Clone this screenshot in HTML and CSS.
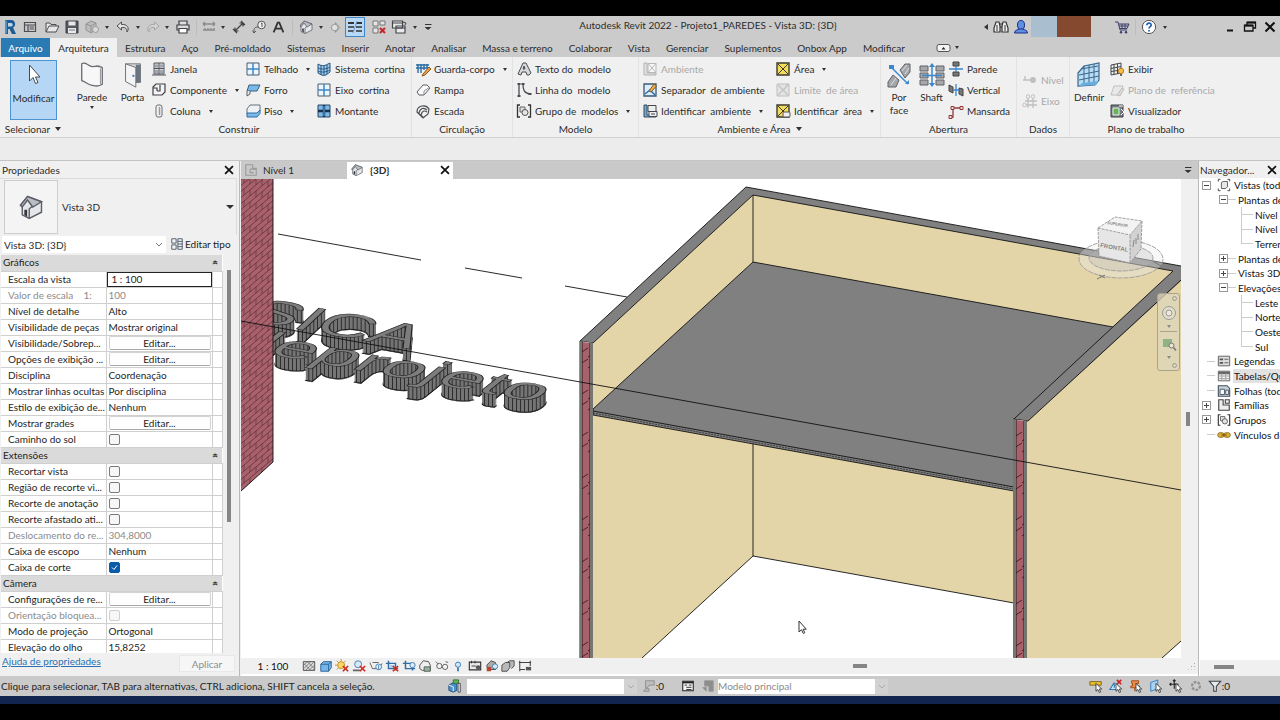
FILE: index.html
```html
<!DOCTYPE html>
<html lang="pt-BR">
<head>
<meta charset="utf-8">
<title>Autodesk Revit 2022 - Projeto1_PAREDES</title>
<link rel="stylesheet" href="styles.css">
</head>
<body>
<svg class="sprite" aria-hidden="true">
  <symbol id="i-r" viewBox="0 0 16 16"><path d="M3 1h6.500a4 4 0 0 1 1.500 7.500L14 15h-4L7.500 10H6v5H3z" fill="#1d5c94"/><path d="M6 4h3a1.500 1.500 0 0 1 0 3.500H6z" fill="#c9d3dc"/><path d="M3 1l2 1v12l-2 1z" fill="#4a93cc"/></symbol>
  <symbol id="i-home" viewBox="0 0 16 16"><path d="M2.500 3.500h11v9h-11zM2.500 6h11M6 6v6.500M7.500 8h4.500M7.500 10h4.500" fill="none" stroke="#4c4c52" stroke-width="1.200"/></symbol>
  <symbol id="i-open" viewBox="0 0 16 16"><path d="M2 13V4h4l1 1.500h5V7M2 13l3-6h10l-3 6z" fill="#e6e6e6" stroke="#4c4c52"/></symbol>
  <symbol id="i-save" viewBox="0 0 16 16"><path d="M2 2h12v12H2z" fill="#55575e" stroke="#3e4046"/><path d="M4.500 2.500h7v4h-7zM4 9h8v5H4z" fill="#e8e8ea"/><path d="M5 11h6" stroke="#777"/></symbol>
  <symbol id="i-sync" viewBox="0 0 16 16"><path d="M2 5l5-3 5 2v6l-5 4-5-3z" fill="#bdbdbd" stroke="#939393"/><path d="M2 5l5 2 5-3M7 7v7" fill="none" stroke="#939393"/><circle cx="11.500" cy="10.500" r="3" fill="#d9d9d9" stroke="#999"/></symbol>
  <symbol id="i-undo" viewBox="0 0 16 16"><path d="M6.500 3L2 7l4.500 4V8.500c4-.5 5.500 1 5.500 4.500 3-4 0-8-5.500-7.500z" fill="#e4e4e4" stroke="#4c4c52"/></symbol>
  <symbol id="i-redo" viewBox="0 0 16 16"><path d="M9.500 3L14 7l-4.500 4V8.500c-4-.5-5.500 1-5.500 4.500-3-4 0-8 5.500-7.500z" fill="#d4d4d4" stroke="#a5a5a5"/></symbol>
  <symbol id="i-print" viewBox="0 0 16 16"><path d="M4 6V2h8v4M4 11H2V6h12v5h-2" fill="#ddd" stroke="#3f4046" stroke-width="1.200"/><path d="M4 9.500h8V14H4z" fill="#fff" stroke="#3f4046" stroke-width="1.200"/></symbol>
  <symbol id="i-meas" viewBox="0 0 16 16"><path d="M2 5h12M2 5l2-2M2 5l2 2M14 5l-2-2M14 5l-2 2M2 11h12M4 9v2M7 9v2M10 9v2M13 9v2" fill="none" stroke="#8a8a8a" stroke-width="1.300"/></symbol>
  <symbol id="i-dim" viewBox="0 0 16 16"><path d="M4 12L12 4M2 10l4 4M10 2l4 4M4 12V8.500M4 12h3.500M12 4H8.500M12 4v3.500" fill="none" stroke="#3f4046" stroke-width="1.200"/></symbol>
  <symbol id="i-tag" viewBox="0 0 16 16"><circle cx="10.500" cy="6" r="3.800" fill="#eee" stroke="#55555b"/><path d="M10 4.500l1-.5v4M7 8c-4 0-4 2-4 6M3 14l-1.500-2.500M3 14l2-2" fill="none" stroke="#55555b"/></symbol>
  <symbol id="i-a" viewBox="0 0 16 16"><path d="M2 14L7 2h2l5 12M4.500 9.500h7" fill="none" stroke="#333" stroke-width="2.200"/></symbol>
  <symbol id="i-house" viewBox="0 0 16 16"><path d="M2 7l4-5 8 3v6l-7 3.500-4-2V8z" fill="#e4e6e9" stroke="#5c5f67" stroke-width=".8"/><path d="M7 14.500V9l2-1.500" fill="none" stroke="#5c5f67" stroke-width=".8"/><path d="M6 2l8 3-5 3-3-4-3 4-1-1z" fill="#b9bdc4" stroke="#5c5f67" stroke-width=".8"/><path d="M4.200 9.500h1.600v4l-1.600-1z" fill="#35383f"/></symbol>
  <symbol id="i-sect" viewBox="0 0 16 16"><path d="M8 2l5 6-5 6zM2 8h2" fill="#d5d5d5" stroke="#8a8a8a"/><circle cx="7" cy="8" r="4" fill="#e0e0e0" stroke="#8a8a8a"/></symbol>
  <symbol id="i-thin" viewBox="0 0 16 16"><path d="M1 4h6M9 4h6" stroke="#333" stroke-width="2"/><path d="M1 8h6M1 12h6M9 8h6M9 12h6" stroke="#333" stroke-width="1.400"/><path d="M6 14L10 2" stroke="#6a9bd1"/></symbol>
  <symbol id="i-closev" viewBox="0 0 16 16"><path d="M2 2h5v5H2zM9 2h5v4H9zM2 9h5v5H2z" fill="#e6e6e6" stroke="#777"/><path d="M9 9l5 5M14 9l-5 5" stroke="#c3272b" stroke-width="2"/></symbol>
  <symbol id="i-switch" viewBox="0 0 16 16"><path d="M1.500 2h10v7h-10zM5 7h9v7H5z" fill="#e9e9e9" stroke="#44464c" stroke-width="1.200"/><path d="M5 9h9M1.500 4h10M12 3l3 1-1 2" fill="none" stroke="#44464c"/></symbol>
  <symbol id="i-bin" viewBox="0 0 16 16"><path d="M3 3h3l1 4v6H1V9zM10 3h3l2 6v4H9V7z" fill="#eee" stroke="#333" stroke-width="1.200"/><path d="M6 5h4M7 8h2M4 6v6M12 6v6" stroke="#333"/></symbol>
  <symbol id="i-user" viewBox="0 0 16 16"><ellipse cx="8" cy="6" rx="3.500" ry="4.500" fill="#5f8fe0" stroke="#1b2f8a"/><path d="M1.500 14c0-3 3-3 5-4h3c2 1 5 1 5 4z" fill="#5f8fe0" stroke="#1b2f8a"/></symbol>
  <symbol id="i-cart" viewBox="0 0 16 16"><path d="M1 3h3l2 8h7M4.500 5H15l-2 4.500H6M8 5v4M11 5v4M5 7h9" fill="none" stroke="#3b3f6b"/><circle cx="7" cy="13.300" r="1.200" fill="#3b3f6b"/><circle cx="12" cy="13.300" r="1.200" fill="#3b3f6b"/></symbol>
  <symbol id="i-help" viewBox="0 0 16 16"><circle cx="8" cy="8" r="6.600" fill="#fff" stroke="#555"/><path d="M5.800 6.300c0-3 4.500-2.700 4.400-.2C10.100 7.700 8 7.500 8 9.500M8 11v1.500" fill="none" stroke="#1f5fae" stroke-width="1.700"/></symbol>
  <symbol id="i-restore" viewBox="0 0 16 16"><path d="M5 6V3.500h8.500V9H11M2.500 6.500H11V12H2.500z" fill="none" stroke="#111" stroke-width="1.300"/><path d="M2 6.500h9M5 3.500h9" stroke="#111" stroke-width="2"/></symbol>
  <symbol id="i-x" viewBox="0 0 16 16"><path d="M3.500 3.500l9 9M12.500 3.500l-9 9" stroke="#111" stroke-width="2"/></symbol>
  <symbol id="i-min" viewBox="0 0 16 16"><path d="M5 11.500h6" stroke="#111" stroke-width="2"/></symbol>
  <symbol id="i-ribbon" viewBox="0 0 20 16"><rect x="2" y="4.500" width="13" height="7" rx="2" fill="#f3f3f3" stroke="#555"/><path d="M6.500 9.500L8.500 7l2 2.500z" fill="#222"/></symbol>
  <symbol id="i-cursor" viewBox="0 0 16 24"><path d="M3.500 2v16l3.500-3.500 2.500 6 2.500-1-2.500-5.500h4.500z" fill="#fff" stroke="#45474d"/></symbol>
  <symbol id="i-wall" viewBox="0 0 26 30"><path d="M2 3c4-3 6 2 11 3 5 0 6-1 11 1v18c-4 3-7 2-11 1C8 25 6 22 2 21z" fill="#f7f7f8" stroke="#6a6c72" stroke-width="1.400"/><path d="M24 7c-2-2-4-2-7-2 M22 8v17" fill="none" stroke="#8b8d92"/></symbol>
  <symbol id="i-door" viewBox="0 0 20 30"><path d="M2 3h16v20h-6" fill="#d9dadd" stroke="#777a80"/><path d="M13 4h5v19h-5z" fill="#6a7580"/><path d="M2 3l11 4v21L2 22z" fill="#f4f4f5" stroke="#6a6c72"/><circle cx="10.500" cy="16" r="1.200" fill="#3877b8"/></symbol>
  <symbol id="i-window" viewBox="0 0 16 16"><path d="M3 2h10v11H3z" fill="#d5d7db" stroke="#55575d"/><path d="M8 2v11M3 7.500h10M1 14h14" stroke="#55575d"/><path d="M4 3.500h3v3H4zM9 3.500h3v3H9zM4 9h3v3H4zM9 9h3v3H9z" fill="#9fa5ae"/></symbol>
  <symbol id="i-comp" viewBox="0 0 16 16"><path d="M2 5l3-3h9v8l-3 3H2zM6 9h3V3M6 9V6H2" fill="#f4f4f4" stroke="#3f4146" stroke-width="1.200"/></symbol>
  <symbol id="i-col" viewBox="0 0 16 16"><rect x="5" y="2" width="6" height="12" rx="2" fill="#f2f2f2" stroke="#6a6c71"/><path d="M8.500 4v8" stroke="#999" stroke-width="1.500"/></symbol>
  <symbol id="i-grid" viewBox="0 0 16 16"><path d="M2 2h12v12H2z" fill="#eef6fd" stroke="#4b5a6b"/><path d="M8 2v12M2 8h12" stroke="#3c86c9" stroke-width="1.500"/></symbol>
  <symbol id="i-mont" viewBox="0 0 16 16"><path d="M2 2h12v12H2z" fill="#7db9e8" stroke="#2a4661"/><path d="M8 2v12M2 8h12" stroke="#17324d" stroke-width="2.400"/><path d="M8 3v10" stroke="#67b1ec"/></symbol>
  <symbol id="i-ceil" viewBox="0 0 16 16"><path d="M4 3h11l-3 6H2z" fill="#7db9e8" stroke="#34617f"/><path d="M2 9v5l3-2V9" fill="#e6e6e6" stroke="#56626d"/></symbol>
  <symbol id="i-floor" viewBox="0 0 16 16"><path d="M5 2h10v6l-3 3H2V6z" fill="#eef2f5" stroke="#66717c"/><path d="M2 10h10l3-3v3.500L12 14H2z" fill="#7db9e8" stroke="#2e6da6"/></symbol>
  <symbol id="i-curt" viewBox="0 0 16 16"><path d="M2 3c3 2 6 2 8 1l4-2v9l-4 3c-3 1-5 0-8-2z" fill="#9fcdf0" stroke="#28577f"/><path d="M5 4v10M8 4v10M11 4v9M2 7c4 2 8 1 12-1M2 10c4 2 8 1 12-1" fill="none" stroke="#28577f"/></symbol>
  <symbol id="i-rail" viewBox="0 0 16 16"><path d="M1 4h13M1 7h13M3 3v9M6 3v9M9 3v6M12 3v4" stroke="#2b6ca3" stroke-width="1.400"/><path d="M8 13l6-7 2 2-6 6-3 1z" fill="#e7a04b" stroke="#8a5a20"/></symbol>
  <symbol id="i-ramp" viewBox="0 0 16 16"><path d="M2 10l6-7h4l3 3-6 7H4z" fill="#fafafa" stroke="#5b5d63"/><path d="M9 13V9l6-4" fill="none" stroke="#8d8f94"/></symbol>
  <symbol id="i-stair" viewBox="0 0 16 16"><path d="M2 9c0-7 9-8 12-3l-1 5-5 4zM4 10c1-5 5-6 8-3M6 12c1-4 3-5 6-3M2 9l6 5" fill="#f1f1f1" stroke="#4b4d52" stroke-width="1.200"/></symbol>
  <symbol id="i-mtext" viewBox="0 0 16 16"><path d="M2 13L7 2h3l5 10-2 2h-2l-1-3H6l-1 3zM7 8l1-3 1 3z" fill="#d8d9dc" stroke="#4a4c52" fill-rule="evenodd"/></symbol>
  <symbol id="i-mline" viewBox="0 0 16 16"><path d="M3 2v12M7 2c0 6 1 9 7 10" fill="none" stroke="#4a4c52" stroke-width="1.300"/><path d="M1.500 1h3v2h-3zM5.500 1h3v2h-3zM1.500 13h3v2h-3zM12.500 11h3v2h-3z" fill="#4a4c52"/></symbol>
  <symbol id="i-mgrp" viewBox="0 0 16 16"><path d="M4 2H1.500v12H4M12 2h2.500v12H12" fill="none" stroke="#333" stroke-width="1.300"/><path d="M4 4h5v5H4z" fill="#ddd" stroke="#666"/><circle cx="9" cy="9.500" r="3" fill="#e4e4e4" stroke="#555"/></symbol>
  <symbol id="i-room" viewBox="0 0 16 16"><path d="M2 2h3v10h9v2H2z" fill="#b9d7ef" stroke="#3b5873"/><path d="M6 2.500h8v9H6zM6 2.500l8 9M14 2.500l-8 9" fill="#fff" stroke="#666"/></symbol>
  <symbol id="i-roomsep" viewBox="0 0 16 16"><path d="M2 2h12v12H2z" fill="#dcecf8" stroke="#3b5873" stroke-width="1.300"/><path d="M3 12l5-4 5 5" fill="none" stroke="#2e6da6" stroke-width="1.500"/><path d="M7 9l5-7 2.500 2L9 10z" fill="#efb04d" stroke="#7b5a22"/></symbol>
  <symbol id="i-roomtag" viewBox="0 0 16 16"><path d="M2 2h3v10h9v2H2z" fill="#6aa9db" stroke="#3b4a58"/><path d="M6 2.500h8v6H6zM7 8.500h8v5H7zM9 11h4" fill="#eee" stroke="#44474d"/></symbol>
  <symbol id="i-area" viewBox="0 0 16 16"><path d="M2 2h12v12H2z" fill="#f3dc5b" stroke="#3b3a2b" stroke-width="1.400"/><path d="M3 3l10 10M13 3L3 13" stroke="#3b3a2b"/></symbol>
  <symbol id="i-arealim" viewBox="0 0 16 16"><path d="M2 2h12v12H2z" fill="#d4d4d4" stroke="#777"/><path d="M3 3l10 10M13 3L3 13M8 9l5-7" stroke="#888" stroke-width="1.500"/></symbol>
  <symbol id="i-areatag" viewBox="0 0 16 16"><path d="M2 2h12v12H2z" fill="#f3dc5b" stroke="#3b3a2b" stroke-width="1.400"/><path d="M3 3l6 6M13 3L3 13" stroke="#3b3a2b"/><rect x="8" y="9" width="7" height="5" rx="1" fill="#eee" stroke="#555"/></symbol>
  <symbol id="i-face" viewBox="0 0 26 26"><path d="M14 8l5-6h5v8l-5 6zM2 20l5-7 6 5-3 7H2z" fill="#a3a6aa" stroke="#606267"/><path d="M16 9l5-6M5 23l5-7M19 12l4-6" stroke="#ddd"/><path d="M5 5l17 17" stroke="#3b87cf" stroke-width="1.500"/><path d="M3 3h5v4H3zM19 22h4v-4z" fill="#3b87cf"/></symbol>
  <symbol id="i-shaft" viewBox="0 0 26 26"><path d="M1 4h8v5H1zM17 4h8v5h-8zM1 11h8v5H1zM17 11h8v5h-8zM1 18h8v5H1zM17 18h8v5h-8z" fill="#a5a7aa" stroke="#606267"/><path d="M13 2v22M3 13.500h20" stroke="#3b87cf" stroke-width="1.500"/><path d="M10 5l3-4 3 4zM10 21l3 4 3-4z" fill="#3b87cf"/></symbol>
  <symbol id="i-owall" viewBox="0 0 16 16"><path d="M5 1h6v4H5zM5 11h6v4H5z" fill="#777" stroke="#444"/><path d="M1 8h14M8 5v6" stroke="#3b87cf" stroke-width="1.300"/></symbol>
  <symbol id="i-overt" viewBox="0 0 16 16"><path d="M1 3l4 2v6L1 9zM11 6l4 1v7l-4-2z" fill="#777" stroke="#444"/><path d="M8 2v12M5 8h6" stroke="#3b87cf" stroke-width="1.300"/></symbol>
  <symbol id="i-dorm" viewBox="0 0 16 16"><path d="M2 14h3V5h9" fill="none" stroke="#8f3b3b" stroke-width="1.300"/><path d="M1 12.500h3v3H1zM3 3.500h3v3H3zM12 3.500h3v3h-3z" fill="#f0dada" stroke="#8f3b3b"/></symbol>
  <symbol id="i-level" viewBox="0 0 16 16"><path d="M1 8h13M3 4v4" stroke="#777" stroke-width="1.300"/><circle cx="11" cy="8" r="3" fill="#777"/></symbol>
  <symbol id="i-axis" viewBox="0 0 16 16"><path d="M6 5v10M11 5v10M3 8h12M3 12h12" stroke="#777" stroke-width="1.300"/><circle cx="6" cy="3.500" r="1.800" fill="#eee" stroke="#777"/><circle cx="11" cy="3.500" r="1.800" fill="#eee" stroke="#777"/><circle cx="2.500" cy="12" r="1.800" fill="#eee" stroke="#777"/></symbol>
  <symbol id="i-plane" viewBox="0 0 26 28"><path d="M2 12l6-7 15-3v17l-4 5-17 1z" fill="#b9dcf3" stroke="#39688d" stroke-width="1.200"/><path d="M5 8l17-3M3 14l20-4M3 19l20-4M8 5v18M13 4v19M18 3v19" fill="none" stroke="#39688d"/><path d="M6 22l-3 3 17-1 3-4z" fill="#6aaee0"/></symbol>
  <symbol id="i-show" viewBox="0 0 16 16"><path d="M2 4l10-2v10L2 14zM5 3.500v10M8.500 3v10M2 7.500l10-2M2 10.500l10-1.500" fill="#eee" stroke="#44474d"/><circle cx="12" cy="10" r="2.700" fill="#f6c044" stroke="#b57e1f"/><path d="M11 13h2v2h-2z" fill="#666"/></symbol>
  <symbol id="i-refpl" viewBox="0 0 16 16"><path d="M2 13l3-9h9l-3 9z" fill="#ddd" stroke="#777"/><path d="M8 13l5-7 2 1-4 7z" fill="#bbb" stroke="#777"/></symbol>
  <symbol id="i-viewer" viewBox="0 0 16 16"><path d="M2 2h12v12H2z" fill="#777b80" stroke="#3c3f44"/><path d="M4 5h6v7H4z" fill="#66b35c" stroke="#eee"/><path d="M10 3h4M12 6l3 3-3 3" stroke="#fff" fill="none"/></symbol>
  <symbol id="i-plan" viewBox="0 0 16 16"><path d="M2 2h8v4h4v8H2zM7 7h7M7 7v4h4" fill="none" stroke="#999" stroke-width="1.200"/></symbol>
  <symbol id="i-type" viewBox="0 0 16 16"><path d="M2 2h5v5H2zM2 9h5v5H2zM9 2h5v12H9zM9 5h5M9 8h5M9 11h5" fill="#eef3f8" stroke="#47525f"/></symbol>
  <symbol id="i-views" viewBox="0 0 16 16"><path d="M4 1.500H1.500V4M12 1.500h2.500V4M4 14.500H1.500V12M12 14.500h2.500V12" fill="none" stroke="#333"/><path d="M5 5l2-1h5v6l-2 2H5z" fill="#e7e7ea" stroke="#555"/></symbol>
  <symbol id="i-legend" viewBox="0 0 16 16"><path d="M1.500 2.500h13v11h-13z" fill="#ddd" stroke="#555"/><path d="M3 5h4v2H3zM3 9h4v2H3z" fill="#555"/><path d="M8.500 6H13M8.500 10H13" stroke="#555"/></symbol>
  <symbol id="i-sched" viewBox="0 0 16 16"><path d="M1.500 2.500h13v11h-13z" fill="#f3f3f3" stroke="#555"/><path d="M1.500 4.500h13" stroke="#666" stroke-width="3"/><path d="M1.500 8h13M1.500 11h13M5.500 5v8M10 5v8" stroke="#999"/></symbol>
  <symbol id="i-sheet" viewBox="0 0 16 16"><path d="M1.500 2h10l3 3v9h-13z" fill="#c6d2dd" stroke="#3f4c59" stroke-width="1.200"/><path d="M3.500 6h5v6h-5zM10 7h3v5h-3z" fill="#fff" stroke="#3f4c59"/></symbol>
  <symbol id="i-fam" viewBox="0 0 16 16"><path d="M2 2h5v6h7v6H2zM9.500 2h4.500v4H9.500z" fill="#eee" stroke="#444" stroke-width="1.300"/></symbol>
  <symbol id="i-link" viewBox="0 0 16 16"><rect x="1" y="5.500" width="7" height="5" rx="2" fill="#e3b437" stroke="#7a5c10"/><rect x="8" y="5.500" width="7" height="5" rx="2" fill="#e3b437" stroke="#7a5c10"/><path d="M5 8h6" stroke="#7a5c10" stroke-width="1.500"/></symbol>
  <symbol id="v-detail" viewBox="0 0 16 16"><path d="M1.500 3h13v10h-13z" fill="#ddd" stroke="#444"/><path d="M2 7l4-4M2 11l8-8M4 13L14 3M8 13l6-6M12 13l2-2M2 5l8 8M6 3l8 8" stroke="#777"/></symbol>
  <symbol id="v-style" viewBox="0 0 16 16"><path d="M2 6l3-3h9v7l-3 4H2z" fill="#74b6ea" stroke="#245e90"/><path d="M2 6h9v8M11 6l3-3" fill="none" stroke="#245e90"/></symbol>
  <symbol id="v-sun" viewBox="0 0 16 16"><circle cx="7" cy="7" r="4" fill="#f8d568" stroke="#c18a1b"/><path d="M7 0v3M0 7h3M2 2l2 2M12 2l-2 2M2 12l2-2" stroke="#c18a1b"/><path d="M9 8l6 6M15 8l-6 6" stroke="#cb2e25" stroke-width="2"/></symbol>
  <symbol id="v-shadow" viewBox="0 0 16 16"><circle cx="7" cy="6" r="4" fill="#d5e9f8" stroke="#3878ad"/><path d="M1 13h8" stroke="#666" stroke-width="2"/><path d="M9 8l6 6M15 8l-6 6" stroke="#cb2e25" stroke-width="2"/></symbol>
  <symbol id="v-render" viewBox="0 0 16 16"><path d="M1 4l3 7h7l4-6M4 4h7" fill="none" stroke="#555"/><circle cx="11" cy="9" r="3.300" fill="#e7f2fb" stroke="#3878ad"/><path d="M11 7v5" stroke="#3878ad"/></symbol>
  <symbol id="v-crop" viewBox="0 0 16 16"><path d="M1 5h11v8M4 2v9h11" fill="none" stroke="#2f6da3" stroke-width="1.700"/><path d="M6 7h4v3H6z" fill="#96c9ef"/><path d="M9 8l6 6M15 8l-6 6" stroke="#cb2e25" stroke-width="2"/></symbol>
  <symbol id="v-crop2" viewBox="0 0 16 16"><path d="M1 5h11v8M4 2v9h11" fill="none" stroke="#2f6da3" stroke-width="1.700"/><circle cx="12" cy="7" r="3" fill="#d7ebfa" stroke="#3878ad"/></symbol>
  <symbol id="v-lock" viewBox="0 0 16 16"><path d="M2 7l4-5 6 1 2 4v6H5L2 11z" fill="#eee" stroke="#444"/><path d="M7 9h7v5H7z" fill="#8fb59b" stroke="#555"/></symbol>
  <symbol id="v-glass" viewBox="0 0 16 16"><path d="M1 3l3 3M15 4l-3-1" stroke="#555"/><circle cx="5" cy="8" r="3" fill="#f4f4f4" stroke="#555"/><circle cx="11.500" cy="9" r="3" fill="#f4f4f4" stroke="#555"/></symbol>
  <symbol id="v-bulb" viewBox="0 0 16 16"><circle cx="8" cy="6.500" r="3" fill="#cfe6f8" stroke="#2f78b9"/><path d="M7 10h2v4H7z" fill="#2f78b9"/></symbol>
  <symbol id="v-props" viewBox="0 0 16 16"><path d="M1.500 3.500h13v9h-13z" fill="#e9e9e9" stroke="#333" stroke-width="1.300"/><path d="M4 2v3M8 2v3M4 8h5" stroke="#333"/><circle cx="11.500" cy="9.500" r="2.500" fill="#555"/></symbol>
  <symbol id="v-anal" viewBox="0 0 16 16"><path d="M2 7l5-5 5 2v8H3z" fill="#aaa" stroke="#444"/><path d="M2 9h5v5H2z" fill="#b8452f"/><circle cx="11.500" cy="8.500" r="3" fill="#d6eaf9" stroke="#3878ad"/></symbol>
  <symbol id="v-disp" viewBox="0 0 16 16"><path d="M1 7l4-3h5v6l-3 4H1zM7 4l3-2h5v6l-3 3" fill="#b9b9b9" stroke="#444"/></symbol>
  <symbol id="v-cons" viewBox="0 0 16 16"><path d="M2 2v12M1 4h14M14 2v6M2 12h6" stroke="#444" stroke-width="1.200"/><path d="M9 9h6v4H9z" fill="#555"/></symbol>
  <symbol id="s-work" viewBox="0 0 16 16"><path d="M1 7l5-3 4 2v7l-4 2-5-2z" fill="#4a8fcd" stroke="#1f4d77"/><path d="M6 9v5M1 7l5 2" stroke="#fff"/><path d="M6 1h6v4H6z" fill="#63b45b" stroke="#2e6e2b"/><path d="M11.500 5h2.500v10h-2.500z" fill="#e6eef5" stroke="#445"/></symbol>
  <symbol id="s-edit" viewBox="0 0 16 16"><path d="M4 2h10v5H8l-2 3H4zM2 14h6v-3H4z" fill="#bdbdbd" stroke="#8d8d8d"/></symbol>
  <symbol id="s-opt" viewBox="0 0 16 16"><path d="M2 2.500h12v11H2z" fill="#f5f5f5" stroke="#222" stroke-width="1.200"/><path d="M2 4h12" stroke="#222" stroke-width="2"/><path d="M4 7h3M6 9.500h6M6 12h6M9 7h3" stroke="#222"/></symbol>
  <symbol id="s-opt2" viewBox="0 0 16 16"><path d="M4 2h10v12h-5V8H4zM2 10l4 4V9z" fill="#8d8d8d" stroke="#999"/></symbol>
  <symbol id="ptr" viewBox="0 0 16 16"><path d="M8 5v9l2.200-2 1.600 3.500 1.500-.7-1.500-3.300h2.700z" fill="#fff" stroke="#222" stroke-width=".9"/></symbol>
  <symbol id="s-sl" viewBox="0 0 16 16"><path d="M1 3h13v4H1z" fill="#edc22e" stroke="#7a5c10"/><use href="#ptr"/></symbol>
  <symbol id="s-su" viewBox="0 0 16 16"><path d="M6 4l-5 8h9M6 4v6" fill="#cfe6f8" stroke="#2f78b9" stroke-width="1.300"/><path d="M9 1l5 5M14 1L9 6" stroke="#cb2020" stroke-width="1.800"/><use href="#ptr"/></symbol>
  <symbol id="s-sp" viewBox="0 0 16 16"><path d="M3 2h8v3H9v3h3v2H2V8h2V5H3zM6.500 10v4" fill="#ee8a4a" stroke="#a04914"/><use href="#ptr"/></symbol>
  <symbol id="s-sf" viewBox="0 0 16 16"><path d="M2 4l8-3v10l-8 3z" fill="#a9d3f2" stroke="#2f78b9"/><use href="#ptr"/></symbol>
  <symbol id="s-sd" viewBox="0 0 16 16"><path d="M6 1v10M1 6h10M4.500 2.500L6 1l1.500 1.500M2.500 4.500L1 6l1.500 1.500" fill="none" stroke="#222" stroke-width="1.300"/><use href="#ptr"/></symbol>
  <symbol id="s-bg" viewBox="0 0 16 16"><circle cx="8" cy="8" r="4.500" fill="none" stroke="#8f8f8f" stroke-width="2.500" stroke-dasharray="3 1.500"/></symbol>
  <symbol id="s-filter" viewBox="0 0 16 16"><path d="M1.500 2.500h13l-5 6V14h-3V8.500z" fill="#e9ecef" stroke="#3d4046" stroke-width="1.200"/></symbol>
</svg>

<div class="app">
  <div class="letterbox"></div>

  <header class="titlebar">
    <div class="qat">
      <button class="q"><svg class="ic"><use href="#i-r"/></svg></button>
      <button class="q"><svg class="ic"><use href="#i-home"/></svg></button>
      <span class="gap"></span>
      <button class="q"><svg class="ic"><use href="#i-open"/></svg></button>
      <button class="q"><svg class="ic"><use href="#i-save"/></svg></button>
      <button class="q"><svg class="ic"><use href="#i-sync"/></svg></button>
      <button class="q drop"><i class="caret"></i></button>
      <button class="q"><svg class="ic"><use href="#i-undo"/></svg></button>
      <button class="q drop"><i class="caret"></i></button>
      <button class="q narrow"><svg class="ic"><use href="#i-redo"/></svg></button>
      <button class="q drop"><i class="caret"></i></button>
      <button class="q"><svg class="ic"><use href="#i-print"/></svg></button>
      <span class="sep"></span>
      <button class="q narrow"><svg class="ic"><use href="#i-meas"/></svg></button>
      <button class="q drop"><i class="caret"></i></button>
      <button class="q"><svg class="ic"><use href="#i-dim"/></svg></button>
      <button class="q"><svg class="ic"><use href="#i-tag"/></svg></button>
      <button class="q"><svg class="ic sm"><use href="#i-a"/></svg></button>
      <span class="sep"></span>
      <button class="q"><svg class="ic"><use href="#i-house"/></svg></button>
      <button class="q drop"><i class="caret"></i></button>
      <button class="q narrow"><svg class="ic sm"><use href="#i-sect"/></svg></button>
      <button class="q on"><svg class="ic"><use href="#i-thin"/></svg></button>
      <span class="gap"></span><span class="gap"></span><span class="gap"></span>
      <button class="q"><svg class="ic"><use href="#i-closev"/></svg></button>
      <button class="q"><svg class="ic"><use href="#i-switch"/></svg></button>
      <button class="q drop"><i class="caret"></i></button>
      <button class="q drop last"><i class="caret bar"></i></button>
    </div>
    <h1 class="title">Autodesk Revit 2022 - Projeto1_PAREDES - Vista 3D: {3D}</h1>
    <div class="account">
      <button class="q drop"><i class="caret left"></i></button>
      <button class="q"><svg class="ic"><use href="#i-bin"/></svg></button>
      <button class="q"><svg class="ic"><use href="#i-user"/></svg></button>
      <span class="mask blue"></span><span class="mask brown"></span>
      <button class="q cart"><svg class="ic"><use href="#i-cart"/></svg></button>
      <span class="sep"></span>
      <button class="q"><svg class="ic"><use href="#i-help"/></svg></button>
      <button class="q drop"><i class="caret"></i></button>
      <span class="fill"></span>
      <button class="q"><svg class="ic"><use href="#i-min"/></svg></button>
      <button class="q"><svg class="ic"><use href="#i-restore"/></svg></button>
      <button class="q"><svg class="ic"><use href="#i-x"/></svg></button>
    </div>
  </header>

  <nav class="tabs">
    <button class="tab file">Arquivo</button>
    <button class="tab active">Arquitetura</button>
    <button class="tab">Estrutura</button>
    <button class="tab">Aço</button>
    <button class="tab">Pré-moldado</button>
    <button class="tab">Sistemas</button>
    <button class="tab">Inserir</button>
    <button class="tab">Anotar</button>
    <button class="tab">Analisar</button>
    <button class="tab">Massa e terreno</button>
    <button class="tab">Colaborar</button>
    <button class="tab">Vista</button>
    <button class="tab">Gerenciar</button>
    <button class="tab">Suplementos</button>
    <button class="tab">Onbox App</button>
    <button class="tab">Modificar</button>
    <button class="tab toggle"><svg class="ic wide"><use href="#i-ribbon"/></svg><i class="caret"></i></button>
  </nav>

  <section class="ribbon">
    <div class="panel p-select">
      <div class="tools"><button class="big modify"><svg class="cursor-ic"><use href="#i-cursor"/></svg><span>Modificar</span></button></div>
      <button class="ptitle">Selecionar <i class="caret"></i></button>
    </div>
    <div class="panel p-build">
      <div class="tools">
        <button class="big"><svg><use href="#i-wall"/></svg><span>Parede</span><i class="caret"></i></button>
        <button class="big"><svg><use href="#i-door"/></svg><span>Porta</span></button>
        <div class="stack">
          <button class="cmd"><svg class="ic"><use href="#i-window"/></svg>Janela</button>
          <button class="cmd"><svg class="ic"><use href="#i-comp"/></svg>Componente<i class="caret"></i></button>
          <button class="cmd"><svg class="ic"><use href="#i-col"/></svg>Coluna<i class="caret"></i></button>
        </div>
        <div class="stack">
          <button class="cmd"><svg class="ic"><use href="#i-grid"/></svg>Telhado<i class="caret"></i></button>
          <button class="cmd"><svg class="ic"><use href="#i-ceil"/></svg>Forro</button>
          <button class="cmd"><svg class="ic"><use href="#i-floor"/></svg>Piso<i class="caret"></i></button>
        </div>
        <div class="stack">
          <button class="cmd"><svg class="ic"><use href="#i-curt"/></svg>Sistema&nbsp; cortina</button>
          <button class="cmd"><svg class="ic"><use href="#i-grid"/></svg>Eixo&nbsp; cortina</button>
          <button class="cmd"><svg class="ic"><use href="#i-mont"/></svg>Montante</button>
        </div>
      </div>
      <div class="ptitle">Construir</div>
    </div>
    <div class="panel p-one">
      <div class="tools"><div class="stack">
        <button class="cmd"><svg class="ic"><use href="#i-rail"/></svg>Guarda-corpo<i class="caret"></i></button>
        <button class="cmd"><svg class="ic"><use href="#i-ramp"/></svg>Rampa</button>
        <button class="cmd"><svg class="ic"><use href="#i-stair"/></svg>Escada</button>
      </div></div>
      <div class="ptitle">Circulação</div>
    </div>
    <div class="panel p-one">
      <div class="tools"><div class="stack">
        <button class="cmd"><svg class="ic"><use href="#i-mtext"/></svg>Texto do&nbsp; modelo</button>
        <button class="cmd"><svg class="ic"><use href="#i-mline"/></svg>Linha do&nbsp; modelo</button>
        <button class="cmd"><svg class="ic"><use href="#i-mgrp"/></svg>Grupo de&nbsp; modelos<i class="caret"></i></button>
      </div></div>
      <div class="ptitle">Modelo</div>
    </div>
    <div class="panel p-room">
      <div class="tools">
        <div class="stack">
          <button class="cmd" disabled><svg class="ic"><use href="#i-room"/></svg>Ambiente</button>
          <button class="cmd"><svg class="ic"><use href="#i-roomsep"/></svg>Separador&nbsp; de ambiente</button>
          <button class="cmd"><svg class="ic"><use href="#i-roomtag"/></svg>Identificar&nbsp; ambiente<i class="caret"></i></button>
        </div>
        <div class="stack">
          <button class="cmd"><svg class="ic"><use href="#i-area"/></svg>Área<i class="caret"></i></button>
          <button class="cmd" disabled><svg class="ic"><use href="#i-arealim"/></svg>Limite&nbsp; de área</button>
          <button class="cmd"><svg class="ic"><use href="#i-areatag"/></svg>Identificar&nbsp; área<i class="caret"></i></button>
        </div>
      </div>
      <button class="ptitle">Ambiente e Área <i class="caret"></i></button>
    </div>
    <div class="panel p-open">
      <div class="tools">
        <button class="big"><svg><use href="#i-face"/></svg><span>Por<br>face</span></button>
        <button class="big"><svg><use href="#i-shaft"/></svg><span>Shaft</span></button>
        <div class="stack">
          <button class="cmd"><svg class="ic"><use href="#i-owall"/></svg>Parede</button>
          <button class="cmd"><svg class="ic"><use href="#i-overt"/></svg>Vertical</button>
          <button class="cmd"><svg class="ic"><use href="#i-dorm"/></svg>Mansarda</button>
        </div>
      </div>
      <div class="ptitle">Abertura</div>
    </div>
    <div class="panel p-data">
      <div class="tools"><div class="stack">
        <button class="cmd" disabled><svg class="ic"><use href="#i-level"/></svg>Nível</button>
        <button class="cmd" disabled><svg class="ic"><use href="#i-axis"/></svg>Eixo</button>
      </div></div>
      <div class="ptitle">Dados</div>
    </div>
    <div class="panel p-work">
      <div class="tools">
        <button class="big"><svg><use href="#i-plane"/></svg><span>Definir</span></button>
        <div class="stack">
          <button class="cmd"><svg class="ic"><use href="#i-show"/></svg>Exibir</button>
          <button class="cmd" disabled><svg class="ic"><use href="#i-refpl"/></svg>Plano de&nbsp; referência</button>
          <button class="cmd"><svg class="ic"><use href="#i-viewer"/></svg>Visualizador</button>
        </div>
      </div>
      <div class="ptitle">Plano de trabalho</div>
    </div>
  </section>
  <div class="options"></div>

  <main class="work">
    <aside class="props">
      <div class="phead"><h2>Propriedades</h2><button class="q"><svg class="ic"><use href="#i-x"/></svg></button></div>
      <button class="family"><span class="thumb"><svg><use href="#i-house"/></svg></span><span>Vista 3D</span><i class="caret big-caret"></i></button>
      <div class="instance">
        <select aria-label="Instância"><option>Vista 3D: {3D}</option></select>
        <button class="edit-type"><svg class="ic"><use href="#i-type"/></svg>Editar tipo</button>
      </div>
      <div class="pgrid">
        <table>
          <colgroup><col class="c-name"><col class="c-val"><col class="c-link"></colgroup>
          <tbody>
            <tr class="grp"><th colspan="3">Gráficos<b>«</b></th></tr>
            <tr><td><label for="scale">Escala da vista</label></td><td><input id="scale" type="text" value="1 : 100"></td><td></td></tr>
            <tr class="off"><td>Valor de escala &nbsp;&nbsp; 1:</td><td>100</td><td></td></tr>
            <tr><td>Nível de detalhe</td><td>Alto</td><td></td></tr>
            <tr><td>Visibilidade de peças</td><td>Mostrar original</td><td></td></tr>
            <tr><td>Visibilidade/Sobrep...</td><td><button class="edit">Editar...</button></td><td></td></tr>
            <tr><td>Opções de exibição ...</td><td><button class="edit">Editar...</button></td><td></td></tr>
            <tr><td>Disciplina</td><td>Coordenação</td><td></td></tr>
            <tr><td>Mostrar linhas ocultas</td><td>Por disciplina</td><td></td></tr>
            <tr><td>Estilo de exibição de...</td><td>Nenhum</td><td></td></tr>
            <tr><td>Mostrar grades</td><td><button class="edit">Editar...</button></td><td></td></tr>
            <tr><td><label for="sun">Caminho do sol</label></td><td><input id="sun" type="checkbox"></td><td></td></tr>
            <tr class="grp"><th colspan="3">Extensões<b>«</b></th></tr>
            <tr><td><label for="crop">Recortar vista</label></td><td><input id="crop" type="checkbox"></td><td></td></tr>
            <tr><td><label for="cropreg">Região de recorte vi...</label></td><td><input id="cropreg" type="checkbox"></td><td></td></tr>
            <tr><td><label for="annot">Recorte de anotação</label></td><td><input id="annot" type="checkbox"></td><td></td></tr>
            <tr><td><label for="far">Recorte afastado ati...</label></td><td><input id="far" type="checkbox"></td><td></td></tr>
            <tr class="off"><td>Deslocamento do re...</td><td>304,8000</td><td></td></tr>
            <tr><td>Caixa de escopo</td><td>Nenhum</td><td></td></tr>
            <tr><td><label for="box">Caixa de corte</label></td><td><input id="box" type="checkbox" checked></td><td></td></tr>
            <tr class="grp"><th colspan="3">Câmera<b>«</b></th></tr>
            <tr><td>Configurações de re...</td><td><button class="edit">Editar...</button></td><td></td></tr>
            <tr class="off"><td><label for="lock">Orientação bloquea...</label></td><td><input id="lock" type="checkbox" disabled></td><td></td></tr>
            <tr><td>Modo de projeção</td><td>Ortogonal</td><td></td></tr>
            <tr><td>Elevação do olho</td><td>15,8252</td><td></td></tr>
          </tbody>
        </table>
        <div class="track"><div class="thumb-bar"></div></div>
      </div>
      <div class="pfoot"><a href="#">Ajuda de propriedades</a><button disabled>Aplicar</button></div>
    </aside>

    <section class="view">
      <div class="vtabs">
        <button class="vtab"><svg class="ic"><use href="#i-plan"/></svg>Nível 1</button>
        <button class="vtab current"><svg class="ic"><use href="#i-house"/></svg>{3D}<svg class="ic x"><use href="#i-x"/></svg></button>
        <span class="fill"></span>
        <button class="q"><i class="caret bar"></i></button>
      </div>
      <div class="stage">
        <div class="canvas">
          <svg class="scene" viewBox="241 179 940 479" preserveAspectRatio="xMidYMid slice">
            <defs>
              <pattern id="brick" width="12" height="12" patternUnits="userSpaceOnUse" patternTransform="translate(241 179) skewY(-40)">
                <path d="M0 .5h12M0 6.500h12M3 0v6M9 6v6" stroke="#6d3a44" stroke-width=".8" fill="none"/>
              </pattern>
              <pattern id="flute" width="4" height="30" patternUnits="userSpaceOnUse" patternTransform="matrix(.836 -.342 .912 1.9 0 0)">
                <path d="M0 0h4v30H0z" fill="#757575"/><path d="M0 0h1v30H0z" fill="#2c2c2c"/>
              </pattern>
              <pattern id="post" width="14" height="42" patternUnits="userSpaceOnUse">
                <path d="M0 21l14-9M0 32l14-9" stroke="#4a222b" fill="none"/>
              </pattern>
            </defs>
            <path d="M241 179h940v479H241z" fill="#fff"/>
            <path d="M278 234l143 26M465 268l57 10M565 286l62 11" class="ln"/>

            <g class="sides">
              <use href="#model-text" y="13" class="edge"/>
              <use href="#model-text" y="12"/><use href="#model-text" y="11"/><use href="#model-text" y="10"/><use href="#model-text" y="9"/>
              <use href="#model-text" y="8"/><use href="#model-text" y="7"/><use href="#model-text" y="6"/><use href="#model-text" y="5"/>
              <use href="#model-text" y="4"/><use href="#model-text" y="3"/><use href="#model-text" y="2"/><use href="#model-text" y="1"/>
            </g>
            <g class="top">
              <g id="model-text">
                <text transform="matrix(1 .18 -.45 .42 242 319)" class="row1">SICA</text>
                <text transform="matrix(1 .18 -.46 .37 224 346)">deprojeto</text>
              </g>
            </g>
            <path d="M241 179h32v283l-32 29z" fill="#a9616c"/>
            <path d="M241 179h32v283l-32 29z" fill="url(#brick)"/>
            <path d="M273 179v283l-32 29" class="ln"/>

            <path d="M753 195l420 76-159 148v184l-261-47-111 102h-49V343z" fill="#e4d5a8"/>
            <path d="M1027 421l154-141v361l-19 17h-135z" fill="#e4d5a8"/>
            <path d="M753 195v67M753 440v116l261 47M753 556L642 658M1181 641l-19 17" class="ln"/>
            <path d="M593 409l160-147 360 65-99 94v70L593 415z" fill="#808080"/>
            <path d="M593 409l160-147 360 65M593 411l421 76M593 409v6l421 76" class="ln"/>
            <path d="M593 413l421 76" class="ln dash"/>
            <path d="M580 341L746 187l435 79v15l-153 140-15-2 160-148-420-76-160 148z" fill="#808080"/>
            <path d="M580 341L746 187l435 79M593 343l160-148 420 76-159 148M1028 421l153-141M580 341l13 2M1013 419l15 2" class="ln"/>
            <path d="M580 341l13 2v315h-13zM1013 419l14 2v237h-14z" fill="#c8c8c4"/>
            <path d="M582 342l8 1v315h-8zM1016 420l8 1v237h-8z" fill="#a9616c"/>
            <path d="M582 342l8 1v315h-8zM1016 420l8 1v237h-8z" fill="url(#post)"/>
            <path d="M580 341v317M582 341v317M590 343v315M592 343v315M1014 419v239M1016 419v239M1024 421v237M1026 421v237" class="ln"/>
            <path d="M241 321l940 169" class="ln"/>

            <g class="cube">
              <ellipse cx="1121" cy="259" rx="42" ry="19" class="ring"/>
              <ellipse cx="1121" cy="258" rx="32" ry="13" class="ring inner"/>
              <path d="M1098 228l17-11 27 4-12 14z" fill="#f3f3f3"/><path d="M1098 228l32 7v28l-31-7z" fill="#e6e6e6"/><path d="M1130 235l12-14-1 28-11 14z" fill="#d2d2d2"/>
              <path d="M1098 228l17-11 27 4-12 14zM1098 228l1 28 31 7v-28M1142 221l-1 28-11 14" fill="none" stroke="#8b8b8b" stroke-width=".8" stroke-dasharray="3 1"/>
              <text x="1100" y="247" transform="rotate(10 1100 247)">FRONTAL</text>
              <text x="1107" y="224" transform="rotate(9 1107 224)" class="mini">SUPERIOR</text>
              <path d="M1133 247l1-7M1136 244v-6M1138 240v-6" stroke="#888"/>
              <path d="M1097 279l8-4M1099 275l6 3M1154 262l7 4" stroke="#777"/>
            </g>
            <path d="M799 621v11l2.500-2.300 1.800 3.800 1.500-.8-1.700-3.500h3.200z" fill="#fff" stroke="#333"/>
          </svg>
          <div class="navbar">
            <span class="dot"></span>
            <button aria-label="Roda de navegação"><svg viewBox="0 0 16 16"><circle cx="8" cy="8" r="6.500" fill="#e4ddc8" stroke="#999"/><circle cx="8" cy="8" r="3" fill="#eee8d8" stroke="#999"/></svg></button>
            <i class="caret tiny"></i>
            <hr>
            <button aria-label="Zoom"><svg viewBox="0 0 16 16"><path d="M2 3h9v8H2z" fill="#8fb286"/><circle cx="10.500" cy="9.500" r="2.500" fill="#e9e4d4" stroke="#777"/><path d="M12.500 11.500l2.500 3" stroke="#777" stroke-width="1.500"/></svg></button>
            <i class="caret tiny"></i>
            <span class="dot end"></span>
          </div>
        </div>
        <div class="vscroll"><div></div></div>
      </div>
      <div class="vcontrol">
        <button class="scale">1 : 100</button>
        <div class="vtools">
          <button><svg class="ic"><use href="#v-detail"/></svg></button><button><svg class="ic"><use href="#v-style"/></svg></button><button><svg class="ic"><use href="#v-sun"/></svg></button><button><svg class="ic"><use href="#v-shadow"/></svg></button><button><svg class="ic"><use href="#v-render"/></svg></button><button><svg class="ic"><use href="#v-crop"/></svg></button><button><svg class="ic"><use href="#v-crop2"/></svg></button><button><svg class="ic"><use href="#v-lock"/></svg></button><button><svg class="ic"><use href="#v-glass"/></svg></button><button><svg class="ic"><use href="#v-bulb"/></svg></button><button><svg class="ic"><use href="#v-props"/></svg></button><button><svg class="ic"><use href="#v-anal"/></svg></button><button><svg class="ic"><use href="#v-disp"/></svg></button><button><svg class="ic"><use href="#v-cons"/></svg></button>
        </div>
        <div class="hscroll"><div></div></div>
        <span class="grip"></span>
      </div>
    </section>

    <aside class="browser">
      <div class="phead"><h2>Navegador...</h2><button class="q"><svg class="ic"><use href="#i-x"/></svg></button></div>
      <ul class="tree">
        <li class="l0"><button class="tw minus"></button><svg class="ic"><use href="#i-views"/></svg>Vistas (todas)</li>
        <li class="l1"><button class="tw minus"></button>Plantas de piso</li>
        <li class="l2">Nível 1</li>
        <li class="l2">Nível 2</li>
        <li class="l2 end">Terreno</li>
        <li class="l1"><button class="tw plus"></button>Plantas de forro</li>
        <li class="l1"><button class="tw plus"></button>Vistas 3D</li>
        <li class="l1"><button class="tw minus"></button>Elevações</li>
        <li class="l2">Leste</li>
        <li class="l2">Norte</li>
        <li class="l2">Oeste</li>
        <li class="l2 end">Sul</li>
        <li class="l0 leaf"><svg class="ic"><use href="#i-legend"/></svg>Legendas</li>
        <li class="l0 leaf"><svg class="ic"><use href="#i-sched"/></svg><span class="sel">Tabelas/Quantidades</span></li>
        <li class="l0 leaf"><svg class="ic"><use href="#i-sheet"/></svg>Folhas (todas)</li>
        <li class="l0"><button class="tw plus"></button><svg class="ic"><use href="#i-fam"/></svg>Famílias</li>
        <li class="l0"><button class="tw plus"></button><svg class="ic"><use href="#i-mgrp"/></svg>Grupos</li>
        <li class="l0 leaf"><svg class="ic"><use href="#i-link"/></svg>Vínculos do Revit</li>
      </ul>
      <div class="bscroll"><div></div></div>
    </aside>
  </main>

  <footer class="status">
    <p>Clique para selecionar, TAB para alternativas, CTRL adiciona, SHIFT cancela a seleção.</p>
    <button><svg class="ic"><use href="#s-work"/></svg></button>
    <select class="workset" aria-label="Conjunto de trabalho" disabled><option></option></select><i class="arrow"></i>
    <button class="count"><svg class="ic"><use href="#s-edit"/></svg>:0</button>
    <button><svg class="ic"><use href="#s-opt"/></svg></button>
    <button><svg class="ic"><use href="#s-opt2"/></svg></button>
    <select class="option" aria-label="Opção de projeto" disabled><option>Modelo principal</option></select><i class="arrow"></i>
    <span class="fill"></span>
    <button><svg class="ic"><use href="#s-sl"/></svg></button><button><svg class="ic"><use href="#s-su"/></svg></button><button><svg class="ic"><use href="#s-sp"/></svg></button><button><svg class="ic"><use href="#s-sf"/></svg></button><button><svg class="ic"><use href="#s-sd"/></svg></button><button><svg class="ic"><use href="#s-bg"/></svg></button><button class="filter"><svg class="ic"><use href="#s-filter"/></svg>:0</button>
  </footer>
  <div class="taskbar"></div>
  <div class="letterbox"></div>
</div>
</body>
</html>
```
FILE: styles.css
```css
* { box-sizing: border-box; }
body { margin: 0; background: #000; font: 10px/14px Lato, "Open Sans", sans-serif; color: #2b2b2b; }
button, input, select { font: inherit; color: inherit; margin: 0; padding: 0; border: 0; background: none; }
button { display: inline-flex; align-items: center; justify-content: center; white-space: nowrap; }
h1, h2, p, ul { margin: 0; padding: 0; font-size: inherit; font-weight: 400; }
ul { list-style: none; }
.sprite { position: absolute; width: 0; height: 0; }
.ic { width: 14px; height: 14px; flex: none; }
.titlebar .ic { width: 16px; height: 16px; }
.titlebar .ic.sm { width: 13px; height: 13px; }
.ic.wide { width: 20px; height: 16px; }
.fill { flex: 1; }
.caret { flex: none; width: 0; height: 0; border: 2px solid transparent; border-top: 3px solid #333; border-bottom: 0; }
.caret.left { border: 3px solid transparent; border-right: 4px solid #333; border-left: 0; }
.caret.bar { width: 7px; height: 6px; border: 0; background: #333; clip-path: polygon(0 0, 100% 0, 100% 1px, 0 1px, 0 3px, 100% 3px, 50% 100%, 0 3px); }
.caret.tiny { border-top-color: #8a8a80; }

.app { height: 100vh; min-height: 480px; display: flex; flex-direction: column; }
.app > * { flex: none; }
.letterbox { height: 16px; background: #000; }

.titlebar { display: flex; height: 22px; background: #cbcbcb; }
.qat { width: 436px; display: flex; align-items: center; }
.q { width: 20px; height: 20px; flex: none; }
.q.narrow { width: 18px; }
.q.drop { width: 11px; }
.q.last { width: 16px; }
.q.on { background: #b9d9f5; border: 1px solid #3c86c9; }
.gap { width: 2px; }
.sep { width: 7px; height: 16px; flex: none; background: linear-gradient(#bdbdbd, #bdbdbd) center / 1px 100% no-repeat; }
.title { flex: 1; text-align: center; line-height: 18px; white-space: nowrap; }
.account { width: 300px; display: flex; align-items: center; }
.mask { height: 21px; align-self: flex-start; }
.mask.blue { width: 26px; background: #a9bfcf; }
.mask.brown { width: 34px; background: #85492f; }
.cart { margin-left: 21px; }

.tabs { display: flex; height: 19px; padding-left: 1px; background: #cbcbcb; }
.tab { padding: 0 8px; height: 100%; }
.tab.file { width: 49px; background: #2a7ab3; color: #fff; }
.tab.active { width: 67px; background: #f0f0f0; }
.tab.toggle { margin-left: 14px; }

.ribbon { display: grid; grid-template-columns: 67px 345px 101px 126px 242px 136px 53px 1fr; height: 81px; background: #f0f0f0; border-bottom: 1px solid #d2d2d2; }
.panel { display: flex; flex-direction: column; border-right: 1px solid #e2e2e2; padding-top: 1px; min-width: 0; }
.panel:last-child, .p-select { border-right-color: transparent; }
.tools { display: grid; height: 64px; }
.ptitle { height: 14px; display: flex; align-items: center; justify-content: center; gap: 5px; }
.ptitle .caret { border-width: 4px 3px 0; }
.p-build .tools { grid-template-columns: 50px 31px 94px 71px 1fr; }
.p-room .tools { grid-template-columns: 133px 1fr; }
.p-open .tools { grid-template-columns: 34px 31px 1fr; padding-left: 1px; }
.p-work .tools { grid-template-columns: 38px 1fr; }
.p-work .ptitle { width: 152px; }
.stack { display: flex; flex-direction: column; justify-content: center; padding-left: 3px; }
.p-data .stack { padding-left: 5px; }
.p-open .stack, .p-work .stack { padding-left: 1px; }
.cmd { height: 21px; justify-content: flex-start; gap: 3px; }
.cmd .ic { width: 16px; height: 16px; }
.cmd .caret { margin-left: 5px; }
.cmd:disabled { color: #a9a9a9; }
.cmd:disabled .ic { opacity: .4; filter: grayscale(1); }
.big { flex-direction: column; justify-content: flex-start; padding-top: 3px; line-height: 13px; }
.big svg { width: 26px; height: 28px; margin-bottom: 2px; }
.big .caret { margin-top: 2px; }
.modify { margin: 2px 9px 2px 10px; background: #b5d6f4; border: 1px solid #4d94d3; padding-top: 2px; }
.modify .cursor-ic { width: 16px; height: 24px; margin-bottom: 5px; }
.options { height: 22px; background: #ececec; }

.app > .work { flex: 1 1 0; min-height: 0; }
.work { display: grid; grid-template-columns: 240px 1fr 81px; grid-template-rows: minmax(0, 1fr); background: #f0f0f0; border-top: 1px solid #c4c4c4; }
.phead { height: 17px; flex: none; display: flex; align-items: center; justify-content: space-between; padding-left: 2px; }
.props { display: flex; flex-direction: column; border-right: 1px solid #b9b9b9; min-width: 0; }
.family { height: 57px; flex: none; justify-content: flex-start; gap: 4px; padding: 1px 4px; margin-right: 2px; border: 1px solid #dcdcdc; border-left: 0; border-bottom: 0; }
.family .thumb { width: 54px; height: 54px; display: grid; place-items: center; border: 1px solid #cdcdcd; background: #f4f4f5; }
.thumb svg { width: 28px; height: 28px; }
.big-caret { margin-left: auto; margin-right: -2px; border-width: 4px 4px 0; }
.instance { height: 20px; flex: none; display: flex; align-items: flex-start; gap: 4px; padding: 1px 0 0 2px; }
select { appearance: none; height: 17px; background: #fff url("data:image/svg+xml,%3Csvg xmlns='http://www.w3.org/2000/svg' width='8' height='5'%3E%3Cpath d='M1 1l3 3 3-3' fill='none' stroke='%23777'/%3E%3C/svg%3E") right 3px center no-repeat; padding-left: 2px; border-radius: 0; }
.instance select { width: 164px; }
.edit-type { gap: 1px; height: 16px; color: #222; }
.pgrid { flex: 1 1 0; min-height: 0; display: flex; overflow: hidden; padding-left: 1px; }
table { width: 221px; table-layout: fixed; border-collapse: collapse; background: #fff; color: #1e1e1e; align-self: flex-start; }
.c-name { width: 105px; } .c-val { width: 106px; } .c-link { width: 10px; }
td, th { height: 16px; padding: 0 0 0 7px; border: 1px solid #cfcfcf; border-left: 0; line-height: 13px; font-weight: 400; text-align: left; white-space: nowrap; overflow: hidden; }
td + td { padding: 0 1px 0 2px; }
.grp th { background: #dadada; padding-left: 2px; border: 0; }
.grp b { float: right; margin-right: 3px; font-size: 11px; transform: rotate(90deg); }
.off { color: #8b8b8b; }
td input[type="text"] { display: block; width: 105px; height: 15px; margin-left: -2px; padding-left: 4px; border: 1px solid #222; background: #fff; }
.edit { width: 100%; height: 14px; display: flex; border: 1px solid #d2d2d2; border-bottom-color: #a9a9a9; border-radius: 2px; background: #fdfdfd; }
input[type="checkbox"] { appearance: none; display: block; width: 11px; height: 11px; border: 1px solid #7a7a7a; border-radius: 2px; background: #f7f7f7; }
input[type="checkbox"]:disabled { border-color: #cfcfcf; }
input[type="checkbox"]:checked { border-color: #0a5ba8; background: #0a5ba8 url("data:image/svg+xml,%3Csvg xmlns='http://www.w3.org/2000/svg' width='9' height='9'%3E%3Cpath d='M2 4.500l2 2 3-4' fill='none' stroke='%23fff'/%3E%3C/svg%3E") center no-repeat; }
.track { flex: 1; display: flex; justify-content: center; padding-top: 15px; padding-right: 3px; }
.thumb-bar { width: 4px; height: 252px; background: #858585; }
.pfoot { height: 23px; flex: none; display: flex; justify-content: space-between; padding: 1px 4px 5px 2px; }
.pfoot a { color: #2b70b3; }
.pfoot button { width: 56px; height: 17px; margin-top: 1px; background: #f6f6f6; border: 1px solid #e8e8e8; color: #8d8d8d; }

.view { display: flex; flex-direction: column; min-width: 0; padding-left: 1px; border-right: 1px solid #b9b9b9; }
.vtabs { height: 18px; flex: none; display: flex; align-items: center; background: #c9c9c9; }
.vtab { width: 106px; height: 17px; justify-content: flex-start; gap: 5px; padding-left: 3px; }
.vtab.current { background: #fff; font-weight: 700; gap: 6px; }
.vtab .x { margin-left: auto; margin-right: 1px; }
.stage { flex: 1; min-height: 0; display: flex; }
.canvas { position: relative; flex: 1; min-width: 0; background: #fff; overflow: hidden; }
.scene { display: block; width: 100%; height: 100%; }
.ln { fill: none; stroke: #111; stroke-width: .9; }
.dash { stroke-dasharray: 2 1; stroke: #333; }
.scene text { font-family: "Liberation Sans", sans-serif; font-size: 75px; }
.scene .row1 { font-size: 72px; }
.sides { fill: url(#flute); }
.sides .edge { fill: #222; stroke: #111; stroke-width: 1; }
.top { fill: #7d7d7d; stroke: #1c1c1c; stroke-width: 1; }
.cube .ring { fill: #ececec; fill-opacity: .35; stroke: #a2a2a2; stroke-dasharray: 5 1; }
.cube .ring.inner { fill: #bbb; fill-opacity: .3; }
.cube text { font: 700 6px "Liberation Sans", sans-serif; fill: #868686; }
.cube .mini { font-size: 4px; }
.navbar { position: absolute; top: 114px; right: 1px; width: 23px; height: 78px; display: flex; flex-direction: column; align-items: center; justify-content: space-between; padding: 2px; border: 1px solid #a9a28c; border-radius: 3px; background: rgb(222 213 187 / .75); }
.navbar button, .navbar svg { width: 16px; height: 16px; }
.navbar hr { width: 100%; margin: 0; border: 0; border-top: 1px solid #a9a28c; }
.dot { width: 5px; height: 5px; border: 1px solid #999; border-radius: 50%; align-self: flex-end; }
.vscroll { width: 17px; padding: 233px 0 0 5px; background: #f0f0f0; }
.vscroll div { width: 4px; height: 14px; background: #858585; }
.vcontrol { height: 18px; flex: none; display: flex; align-items: center; padding-bottom: 1px; background: #f0f0f0; border-bottom: 2px solid #fff; }
.vcontrol .scale { width: 60px; padding-left: 4px; color: #111; }
.vtools { width: 232px; display: grid; grid-template-columns: repeat(14, 1fr); }
.hscroll { flex: 1; display: flex; justify-content: center; }
.hscroll div { width: 14px; height: 4px; background: #858585; }
.grip { width: 8px; height: 8px; margin-right: 3px; background: radial-gradient(#aaa 1px, transparent 1px) 0 0 / 3px 3px; clip-path: polygon(100% 0, 100% 100%, 0 100%); }

.browser { display: flex; flex-direction: column; min-width: 0; padding-left: 1px; overflow: hidden; background: linear-gradient(#f0f0f0 17px, #fff 17px); }
.browser .phead { padding-left: 0; }
.browser .phead .q { width: 16px; }
.tree { flex: 0 1 264px; display: grid; grid-template-rows: repeat(18, 1fr); color: #111; }
.tree li { display: flex; align-items: center; gap: 3px; white-space: nowrap; min-height: 0; }
.tree .l0 { padding-left: 2px; }
.tree .l0 .ic { margin-left: 3px; }
.tree .leaf { background: linear-gradient(#ccc, #ccc) 7px center / 8px 1px no-repeat; padding-left: 14px; }
.tree .l1 { padding-left: 19px; gap: 10px; background: linear-gradient(#ccc, #ccc) 28px center / 8px 1px no-repeat; }
.tree .l2 { padding-left: 55px; background: linear-gradient(#ccc, #ccc) 41px center / 12px 1px no-repeat, linear-gradient(#ccc, #ccc) 41px 0 / 1px 100% no-repeat; }
.tree .l2.end { background-size: 12px 1px, 1px 50%; }
.sel { background: #e2e2e2; padding: 0 20px 0 1px; margin-left: -1px; }
.tw { width: 9px; height: 9px; flex: none; border: 1px solid #999; }
.tw.minus { background: linear-gradient(#444, #444) center / 5px 1px no-repeat #fff; }
.tw.plus { background: linear-gradient(#444, #444) center / 5px 1px no-repeat, linear-gradient(#444, #444) center / 1px 5px no-repeat #fff; }
.bscroll { margin-top: auto; height: 16px; flex: none; padding: 5px 0 0 14px; background: #f0f0f0; }
.bscroll div { width: 20px; height: 4px; background: #858585; }

.status { height: 20px; display: flex; align-items: center; padding: 0 48px 0 1px; background: #cacaca; color: #1e1e1e; }
.status p { width: 444px; white-space: nowrap; }
.status button { width: 20px; height: 20px; flex: none; }
.status select { height: 15px; opacity: 1; background-image: none; }
.arrow { width: 13px; height: 15px; background: #d2d2d2 url("data:image/svg+xml,%3Csvg xmlns='http://www.w3.org/2000/svg' width='8' height='5'%3E%3Cpath d='M1 1l3 3 3-3' fill='none' stroke='%23aaa'/%3E%3C/svg%3E") center no-repeat; }
.workset { width: 157px; margin-left: 2px; }
.status .count { width: 30px; margin: 0 10px 0 1px; }
.status .option { width: 157px; color: #8a8a8a; padding-left: 0; }
.status .filter { width: 26px; }
.taskbar { height: 8px; background: #12254f; }
```
